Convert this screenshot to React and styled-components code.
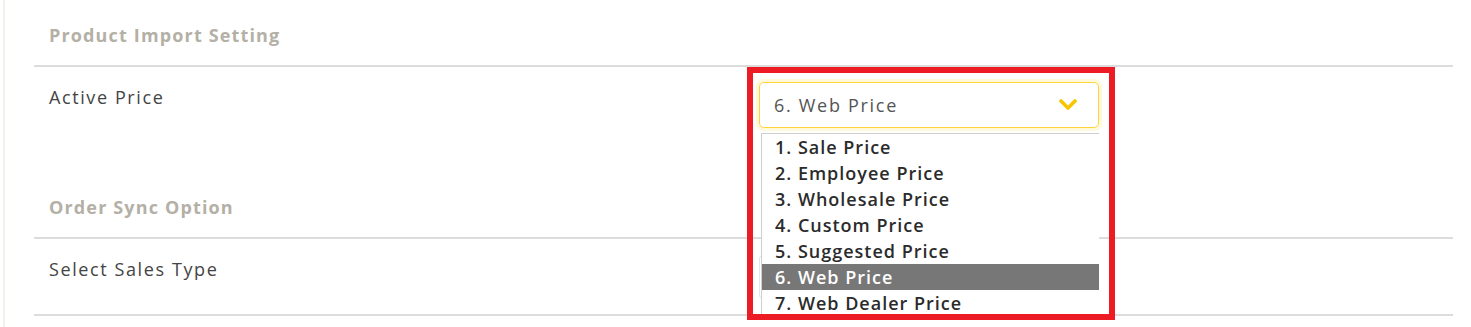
import React from 'react'
import styled, { createGlobalStyle } from 'styled-components';

const options = [
  '1. Sale Price',
  '2. Employee Price',
  '3. Wholesale Price',
  '4. Custom Price',
  '5. Suggested Price',
  '6. Web Price',
  '7. Web Dealer Price',
];

const Chevron = () => (
  <svg width="18" height="12" viewBox="0 0 18 12">
    <polyline points="2,2 9,9 16,2" fill="none" stroke="#f7c600" strokeWidth="3.6" strokeLinecap="round" strokeLinejoin="round" />
  </svg>
);

const App = () => {
  return (
    <>
      <GlobalStyle />
      <Page>
        <Section>
          <Heading>Product Import Setting</Heading>
          <FieldRow height={105}>
            <Label>Active Price</Label>
            <SelectWrap>
              <Select focused>
                <Value>6. Web Price</Value>
                <Chevron />
              </Select>
              <OptionList>
                {options.map((o) => (
                  <Option key={o} active={o === '6. Web Price'}>{o}</Option>
                ))}
              </OptionList>
            </SelectWrap>
          </FieldRow>
        </Section>
        <Section>
          <Heading>Order Sync Option</Heading>
          <FieldRow height={75} last>
            <Label>Select Sales Type</Label>
            <SelectWrap>
              <Select />
            </SelectWrap>
          </FieldRow>
        </Section>
        <Highlight />
      </Page>
    </>
  )
}

export default App

const GlobalStyle = createGlobalStyle`
  body {
    margin: 0;
    background: #fff;
    font-family: "Open Sans", "Liberation Sans", sans-serif;
  }
`;

const Page = styled.div`
  position: relative;
  margin-left: 3px;
  border-left: 2px solid #f4f1ec;
  padding: 0 18px 0 29px;
  height: 327px;
  box-sizing: border-box;
  overflow: hidden;
`;

const Section = styled.div`
  display: flex;
  flex-direction: column;
`;

const Heading = styled.div`
  box-sizing: border-box;
  height: 67px;
  padding: 24px 0 0 15px;
  line-height: 22px;
  font-size: 18px;
  font-weight: 700;
  color: #b4b0a6;
  letter-spacing: 1.15px;
  border-bottom: 2px solid #dcdcdc;
`;

const FieldRow = styled.div`
  display: grid;
  grid-template-columns: 710px 340px;
  box-sizing: border-box;
  height: ${(p) => p.height + (p.last ? 2 : 0)}px;
  padding-left: 15px;
  border-bottom: ${(p) => (p.last ? '2px solid #dcdcdc' : 'none')};
`;

const Label = styled.div`
  padding-top: 19px;
  line-height: 22px;
  font-size: 18px;
  color: #444;
  letter-spacing: 1.6px;
`;

const SelectWrap = styled.div`
  position: relative;
  padding-top: 15px;
`;

const Select = styled.div`
  box-sizing: border-box;
  height: 46px;
  display: flex;
  align-items: center;
  justify-content: space-between;
  padding: 0 21px 0 14px;
  border-radius: 5px;
  border: 1px solid ${(p) => (p.focused ? '#ffd43b' : '#e4e4e4')};
  box-shadow: ${(p) => (p.focused ? '0 0 0 3px rgba(255, 221, 80, 0.22)' : 'none')};
`;

const Value = styled.span`
  font-size: 18px;
  color: #555;
  letter-spacing: 1.7px;
`;

const OptionList = styled.ul`
  position: absolute;
  top: 66px;
  left: 2px;
  right: 0;
  margin: 0;
  padding: 0;
  list-style: none;
  background: #fff;
  border-top: 1px solid #cfcfcf;
  border-left: 1px solid #cfcfcf;
  z-index: 2;
`;

const Option = styled.li`
  height: 26px;
  line-height: 26px;
  padding-left: 13px;
  font-size: 18px;
  font-weight: 600;
  letter-spacing: 1px;
  color: ${(p) => (p.active ? '#fff' : '#2b2b2b')};
  background: ${(p) => (p.active ? '#777' : 'transparent')};
`;

const Highlight = styled.div`
  position: absolute;
  left: 742px;
  top: 67px;
  width: 368px;
  height: 253px;
  box-sizing: border-box;
  border: 6px solid #ed1c24;
  z-index: 3;
  pointer-events: none;
`;
